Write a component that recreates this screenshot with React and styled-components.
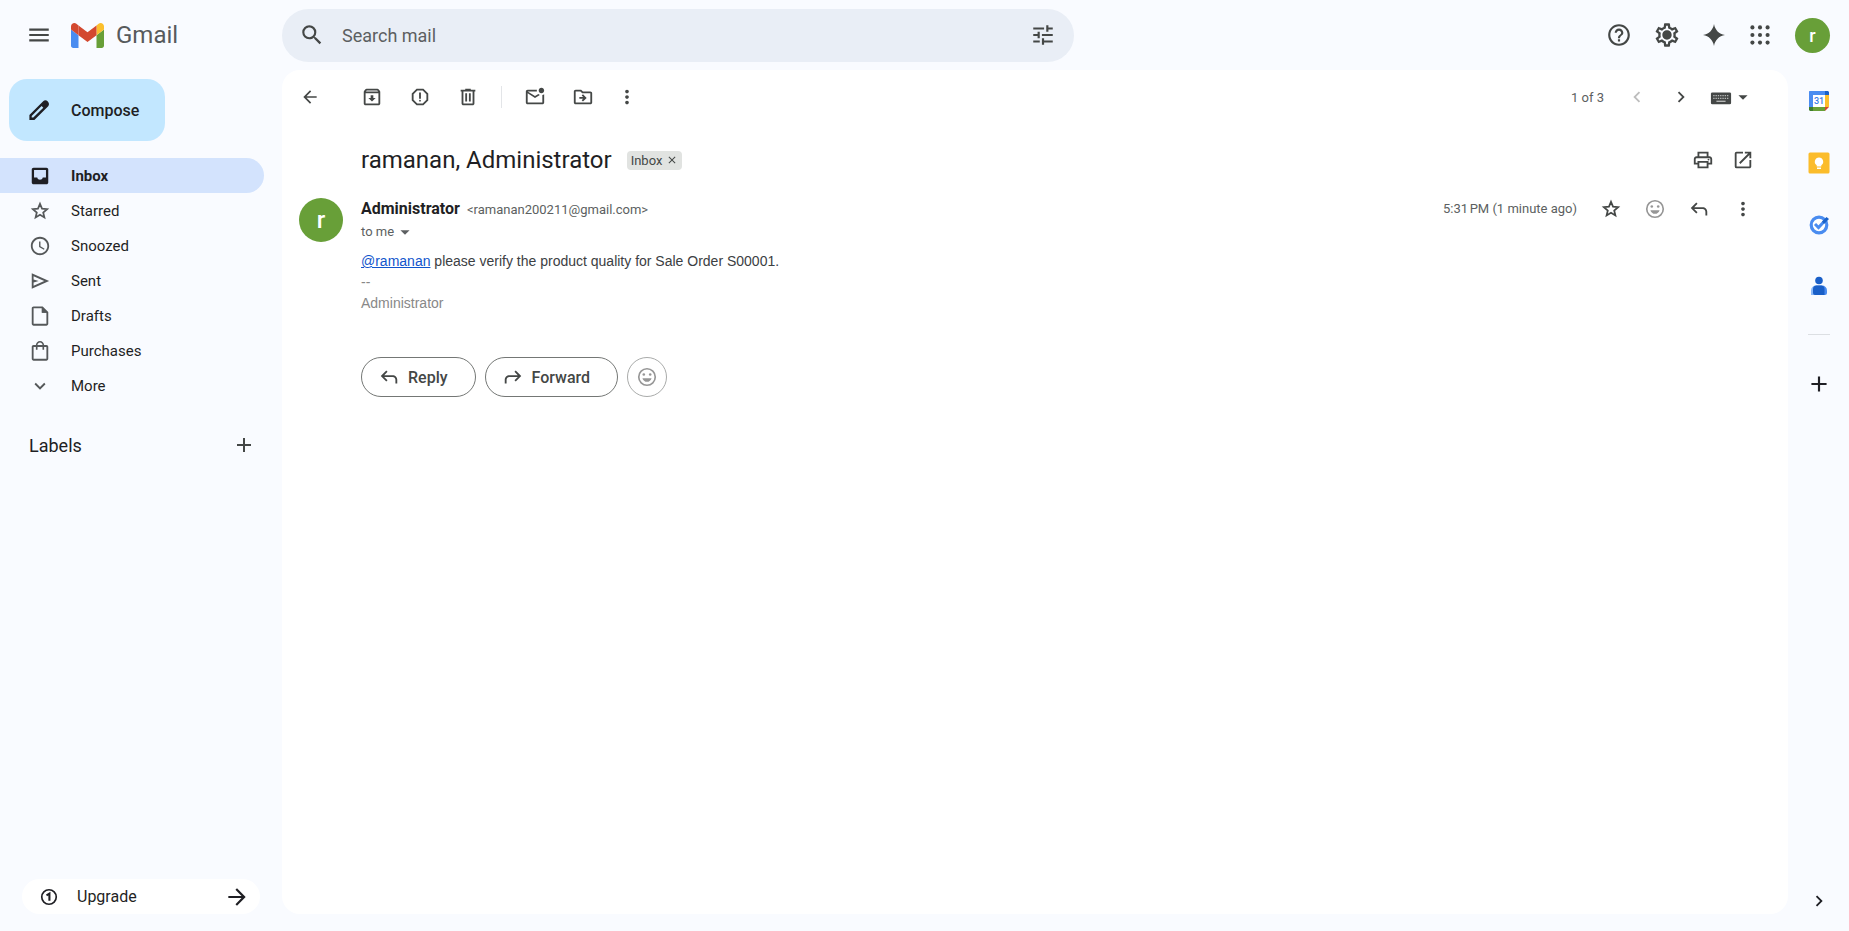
import React, { useState } from "react";
import styled, { createGlobalStyle } from "styled-components";
import {
  MdAccessTime,
  MdAdd,
  MdArrowBack,
  MdArrowDropDown,
  MdArrowForward,
  MdChevronLeft,
  MdChevronRight,
  MdClose,
  MdExpandMore,
  MdHelpOutline,
  MdMenu,
  MdMoreVert,
  MdOpenInNew,
  MdOutlineArchive,
  MdOutlineDriveFileMove,
  MdOutlineMarkEmailUnread,
  MdOutlineReport,
  MdOutlineSettings,
  MdSearch,
  MdTune,
} from "react-icons/md";

const Svg = ({ size = 22, children, ...rest }) => (
  <svg width={size} height={size} viewBox="0 0 24 24" fill="currentColor" aria-hidden="true" {...rest}>
    {children}
  </svg>
);

const GmailMark = () => (
  <svg width="33" height="25" viewBox="52 42 88 66" aria-hidden="true">
    <path fill="#4a8cf0" d="M58 108h14V74L52 59v43c0 3.32 2.69 6 6 6" />
    <path fill="#689f38" d="M120 108h14c3.32 0 6-2.69 6-6V59l-20 15" />
    <path fill="#fbbf2d" d="M120 48v26l20-15v-8c0-7.42-8.47-11.65-14.4-7.2" />
    <path fill="#d3482f" d="M72 74V48l24 18 24-18v26L96 92" />
    <path fill="#d3482f" d="M52 51v8l20 15V48l-5.6-4.2c-5.94-4.45-14.4-.22-14.4 7.2" />
  </svg>
);

const PencilIcon = () => (
  <Svg size={24}>
    <path d="M20.6 3.2c-1.3-1.3-3.2-1.2-4.4 0L2.4 16.9V22h5L21.2 8.2c1.3-1.3.9-3.7-.6-5zM6.3 19.6H4.7V18L14.6 8.1l1.7 1.7z" />
  </Svg>
);

const InboxIcon = () => (
  <Svg>
    <path
      fillRule="evenodd"
      d="M19 3H5c-1.1 0-2 .9-2 2v14c0 1.1.9 2 2 2h14c1.1 0 2-.9 2-2V5c0-1.1-.9-2-2-2zM5.5 5.500h13v8H15c-.3 1.500-1.500 2.500-3 2.500s-2.700-1-3-2.500H5.500z"
    />
  </Svg>
);

const StarIcon = () => (
  <Svg>
    <path
      fill="none"
      stroke="currentColor"
      strokeWidth="1.9"
      d="M12 4.200l2.200 5.200 5.600.5-4.300 3.700 1.300 5.500-4.800-2.900-4.800 2.900 1.300-5.500-4.300-3.700 5.600-.5z"
    />
  </Svg>
);

const SendIcon = () => (
  <Svg>
    <path d="M3 20.5V3.5L22 12zM5 17.2 16.6 12 5 6.8v3.5l5.5 1.7L5 13.7z" />
  </Svg>
);

const DraftIcon = () => (
  <Svg>
    <path d="M15 1.5H5c-1.1 0-2 .9-2 2v17c0 1.1.9 2 2 2h14c1.1 0 2-.9 2-2V7.500zM19 20.500H5v-17h9V8.500h5z" />
    <path d="M14 2l6.500 6.500H14z" />
  </Svg>
);

const BagIcon = () => (
  <Svg>
    <path d="M19 5.500h-2.500C16.300 3 14.500 1 12 1S7.700 3 7.500 5.500H5c-1.100 0-2 .9-2 2v13c0 1.100.9 2 2 2h14c1.100 0 2-.9 2-2v-13c0-1.100-.9-2-2-2zM12 2.800c1.400 0 2.600 1.200 2.800 2.700H9.200c.2-1.500 1.400-2.700 2.800-2.700zM19 20.500H5v-13h2.500v3h1.800v-3h5.400v3h1.800v-3H19z" />
  </Svg>
);

const TrashIcon = () => (
  <Svg>
    <path d="M15 4V3H9v1H4v2h1v13c0 1.100.9 2 2 2h10c1.100 0 2-.9 2-2V6h1V4h-5zm2 15H7V6h10v13zM9 8h2v9H9zm4 0h2v9h-2z" />
  </Svg>
);

const PrintIcon = () => (
  <Svg>
    <path d="M19 8h-1V3H6v5H5c-1.700 0-3 1.300-3 3v6h4v4h12v-4h4v-6c0-1.700-1.300-3-3-3zM8 5h8v3H8zm8 14H8v-4h8zm4-4h-2v-2H6v2H4v-4c0-.6.4-1 1-1h14c.6 0 1 .4 1 1z" />
    <circle cx="18" cy="11.5" r="1" />
  </Svg>
);

const KeyboardIcon = () => (
  <Svg>
    <rect x="1" y="7" width="22" height="13" rx="1.5" />
    <path stroke="#b4b6b5" strokeWidth="1.5" strokeDasharray="1.5 1" d="M3.500 10.500h17M3.500 13.500h17" />
    <path stroke="#b4b6b5" strokeWidth="1.5" d="M7 16.700h10" />
  </Svg>
);

const ReplyIcon = () => (
  <Svg>
    <path d="M19 19v-4c0-1.660-1.340-3-3-3H6.800l3.600 3.600L9 17l-6-6 6-6 1.400 1.400L6.800 10H16c2.760 0 5 2.240 5 5v4z" />
  </Svg>
);

const ForwardIcon = () => (
  <Svg>
    <path d="M5 19v-4c0-1.660 1.340-3 3-3h9.200l-3.600 3.600L15 17l6-6-6-6-1.400 1.400 3.600 3.600H8c-2.760 0-5 2.240-5 5v4z" />
  </Svg>
);

const SmileIcon = () => (
  <Svg>
    <circle cx="12" cy="12" r="9" fill="none" stroke="currentColor" strokeWidth="1.8" />
    <circle cx="8.5" cy="9.3" r="1.4" />
    <circle cx="15.5" cy="9.3" r="1.4" />
    <path d="M7 13.300h10c-.6 2.300-2.600 4-5 4s-4.400-1.700-5-4z" />
  </Svg>
);

const SettingsIcon = () => (
  <GearStack>
    <MdOutlineSettings size={28} />
    <GearDot />
  </GearStack>
);

const SparkIcon = () => (
  <Svg size={24}>
    <path d="M12 1c1 6 5 10 11 11-6 1-10 5-11 11-1-6-5-10-11-11 6-1 10-5 11-11z" />
  </Svg>
);

const AppsIcon = () => (
  <Svg size={26}>
    {[5, 12, 19].map((y) => [5, 12, 19].map((x) => <circle key={`${x}-${y}`} cx={x} cy={y} r="1.9" />))}
  </Svg>
);

const OneIcon = () => (
  <Svg size={20} fill="none" stroke="currentColor">
    <circle cx="12" cy="12" r="8.7" strokeWidth="2" />
    <path d="M9 10l3.500-2v8.500" strokeWidth="2.5" />
  </Svg>
);

const CalendarIcon = () => (
  <svg width="22" height="22" viewBox="0 0 22 22" aria-hidden="true">
    <path fill="#4a8cf0" d="M1.500 1H17v4H5v12H1V1.500z" />
    <path fill="#1a62c9" d="M17 1h3l1 1v3h-4z" />
    <path fill="#fbbf2d" d="M17 5h4v12h-4z" />
    <path fill="#689f38" d="M5 17h12v4H5z" />
    <path fill="#3f7d2c" d="M1 17h4v4H2l-1-1z" />
    <path fill="#d3482f" d="M17 17h4l-4 4z" />
    <path fill="#fff" d="M5 5h12v12H5z" />
    <text x="11" y="14" textAnchor="middle" fontFamily="Roboto, sans-serif" fontSize="9" fontWeight="500" fill="#3a7de8">
      31
    </text>
  </svg>
);

const KeepIcon = () => (
  <svg width="22" height="22" viewBox="0 0 22 22" aria-hidden="true">
    <rect x=".5" y=".5" width="21" height="21" rx="1.5" fill="#fbbc2b" />
    <path fill="#fff" d="M11 5.500a4.200 4.200 0 0 0-2.300 7.700V14.500h4.600v-1.300A4.200 4.200 0 0 0 11 5.500zM9 15.500h4V17H9z" />
  </svg>
);

const TasksIcon = () => (
  <svg width="22" height="22" viewBox="0 0 22 22" aria-hidden="true">
    <circle cx="11" cy="11" r="7.8" fill="#fff" stroke="#4a8cf0" strokeWidth="3.2" />
    <path fill="none" stroke="#4a8cf0" strokeWidth="3" d="M7 10l3.500 3.500L18 5.500" />
    <path fill="#1a62c9" d="M14 7.500L18.500 3l2.500 2-5 5z" />
  </svg>
);

const ContactsIcon = () => (
  <svg width="22" height="22" viewBox="0 0 22 22" aria-hidden="true">
    <circle cx="11" cy="4.5" r="3.8" fill="#1a5fc8" />
    <path fill="#8ab8f8" d="M3 19v-4.500A5 5 0 0 1 8 9.500V19z" />
    <path fill="#4a8cf0" d="M8 9.500h6a5 5 0 0 1 5 5V17a2 2 0 0 1-2 2H8z" />
    <path fill="#1a5fc8" d="M8.500 9.500h5A3.500 3.500 0 0 1 16.500 13v6H7a2 2 0 0 1-2-2v-4a3.500 3.500 0 0 1 3.500-3.500z" />
  </svg>
);

const folders = [
  { name: "Inbox", icon: <InboxIcon /> },
  { name: "Starred", icon: <StarIcon /> },
  { name: "Snoozed", icon: <MdAccessTime size={22} /> },
  { name: "Sent", icon: <SendIcon /> },
  { name: "Drafts", icon: <DraftIcon /> },
  { name: "Purchases", icon: <BagIcon /> },
  { name: "More", icon: <MdExpandMore size={22} /> },
];

const addons = [
  { name: "Calendar", icon: <CalendarIcon /> },
  { name: "Keep", icon: <KeepIcon /> },
  { name: "Tasks", icon: <TasksIcon /> },
  { name: "Contacts", icon: <ContactsIcon /> },
];

const App = () => {
  const [keyword, setKeyword] = useState("");
  const [folder, setFolder] = useState("Inbox");

  return (
    <Page>
      <GlobalStyle />
      <Header>
        <Brand>
          <IconButton aria-label="Main menu">
            <MdMenu size={26} />
          </IconButton>
          <Logo href="#inbox">
            <GmailMark />
            Gmail
          </Logo>
        </Brand>
        <SearchForm role="search">
          <IconButton type="button" aria-label="Search">
            <MdSearch size={26} />
          </IconButton>
          <SearchInput
            aria-label="Search mail"
            placeholder="Search mail"
            value={keyword}
            onChange={(e) => setKeyword(e.target.value)}
          />
          <IconButton type="button" aria-label="Show search options">
            <MdTune size={26} />
          </IconButton>
        </SearchForm>
        <HeaderActions>
          <IconButton $width={48} aria-label="Support">
            <MdHelpOutline size={26} />
          </IconButton>
          <IconButton $width={48} aria-label="Settings">
            <SettingsIcon />
          </IconButton>
          <IconButton $width={46} aria-label="Ask Gemini">
            <SparkIcon />
          </IconButton>
          <IconButton $width={46} aria-label="Google apps">
            <AppsIcon />
          </IconButton>
          <AccountButton aria-label="Account">
            <Avatar $size={35}>r</Avatar>
          </AccountButton>
        </HeaderActions>
      </Header>

      <Body>
        <Sidebar>
          <ComposeButton>
            <PencilIcon />
            Compose
          </ComposeButton>
          <FolderNav>
            {folders.map((item) => (
              <FolderLink
                key={item.name}
                href={`#${item.name.toLowerCase()}`}
                $active={item.name === folder}
                onClick={() => setFolder(item.name)}
              >
                {item.icon}
                {item.name}
              </FolderLink>
            ))}
          </FolderNav>
          <LabelsHeader>
            <LabelsTitle>Labels</LabelsTitle>
            <IconButton $width={40} aria-label="Create new label">
              <MdAdd size={24} />
            </IconButton>
          </LabelsHeader>
          <UpgradeButton>
            <OneIcon />
            <UpgradeText>Upgrade</UpgradeText>
            <MdArrowForward size={26} />
          </UpgradeButton>
        </Sidebar>

        <Panel>
          <Toolbar>
            <BackButton aria-label="Back to Inbox">
              <MdArrowBack size={20} />
            </BackButton>
            <IconButton $width={48} aria-label="Archive">
              <MdOutlineArchive size={22} />
            </IconButton>
            <IconButton $width={48} aria-label="Report spam">
              <MdOutlineReport size={22} />
            </IconButton>
            <IconButton $width={48} aria-label="Delete">
              <TrashIcon />
            </IconButton>
            <Divider />
            <IconButton $width={48} aria-label="Mark as unread">
              <MdOutlineMarkEmailUnread size={22} />
            </IconButton>
            <IconButton $width={48} aria-label="Move to">
              <MdOutlineDriveFileMove size={22} />
            </IconButton>
            <IconButton $width={40} aria-label="More">
              <MdMoreVert size={22} />
            </IconButton>
            <Pager>
              <PagerText>1 of 3</PagerText>
              <IconButton disabled aria-label="Newer">
                <MdChevronLeft size={22} />
              </IconButton>
              <IconButton aria-label="Older">
                <MdChevronRight size={22} />
              </IconButton>
              <InputToolButton aria-label="Input tools">
                <KeyboardIcon />
                <MdArrowDropDown size={22} />
              </InputToolButton>
            </Pager>
          </Toolbar>

          <SubjectRow>
            <Subject>ramanan, Administrator</Subject>
            <InboxTag>
              Inbox
              <TagRemove aria-label="Remove label Inbox">
                <MdClose size={12} />
              </TagRemove>
            </InboxTag>
            <SubjectActions>
              <IconButton $width={40} aria-label="Print">
                <PrintIcon />
              </IconButton>
              <IconButton $width={40} aria-label="Open in new window">
                <MdOpenInNew size={22} />
              </IconButton>
            </SubjectActions>
          </SubjectRow>

          <Message>
            <Avatar $size={44}>r</Avatar>
            <MessageMain>
              <MessageHeader>
                <Sender>
                  <SenderLine>
                    <SenderName>Administrator</SenderName>
                    <SenderMail>&lt;ramanan200211@gmail.com&gt;</SenderMail>
                  </SenderLine>
                  <DetailsButton>
                    to me
                    <MdArrowDropDown size={22} />
                  </DetailsButton>
                </Sender>
                <SentTime>5:31{"\u202f"}PM (1 minute ago)</SentTime>
                <MessageActions>
                  <IconButton aria-label="Star">
                    <StarIcon />
                  </IconButton>
                  <IconButton $faded aria-label="Add reaction">
                    <SmileIcon />
                  </IconButton>
                  <IconButton aria-label="Reply">
                    <ReplyIcon />
                  </IconButton>
                  <IconButton aria-label="More message options">
                    <MdMoreVert size={22} />
                  </IconButton>
                </MessageActions>
              </MessageHeader>
              <MessageText>
                <Mention href="#ramanan">@ramanan</Mention> please verify the product quality for Sale Order S00001.
              </MessageText>
              <Signature>
                --
                <br />
                Administrator
              </Signature>
              <ReplyRow>
                <PillButton>
                  <ReplyIcon />
                  Reply
                </PillButton>
                <PillButton>
                  <ForwardIcon />
                  Forward
                </PillButton>
                <RoundButton aria-label="Add reaction">
                  <SmileIcon />
                </RoundButton>
              </ReplyRow>
            </MessageMain>
          </Message>
        </Panel>

        <AddonRail>
          {addons.map((item) => (
            <AddonButton key={item.name} aria-label={item.name}>
              {item.icon}
            </AddonButton>
          ))}
          <RailLine />
          <AddonButton aria-label="Get add-ons">
            <MdAdd size={26} />
          </AddonButton>
          <HideButton aria-label="Hide side panel">
            <MdChevronRight size={22} />
          </HideButton>
        </AddonRail>
      </Body>
    </Page>
  );
};
export default App;

const GlobalStyle = createGlobalStyle`
  * {
    box-sizing: border-box;
  }

  body {
    margin: 0;
    background: #f9fbff;
    color: #1f1f24;
    font-family: Roboto, "Liberation Sans", sans-serif;
    font-size: 15px;
  }

  button {
    padding: 0;
    border: none;
    background: none;
    color: inherit;
    font: inherit;
    cursor: pointer;
  }

  svg {
    display: block;
    flex-shrink: 0;
  }
`;

const Page = styled.div`
  display: flex;
  flex-direction: column;
  min-height: 100vh;
`;

const Header = styled.header`
  display: flex;
  align-items: center;
  height: 70px;
  padding-right: 19px;
`;

const Brand = styled.div`
  display: flex;
  align-items: center;
  flex: none;
  width: 282px;
  padding-left: 17px;
`;

const IconButton = styled.button`
  display: flex;
  align-items: center;
  justify-content: center;
  flex: none;
  width: ${(props) => props.$width || 44}px;
  height: 40px;
  color: ${(props) => (props.$faded ? "#969696" : "#444746")};

  &:disabled {
    color: #bdbdbd;
    cursor: default;
  }
`;

const Logo = styled.a`
  display: flex;
  align-items: center;
  gap: 12px;
  padding-left: 10px;
  color: #575a5c;
  font-size: 24px;
  text-decoration: none;
`;

const SearchForm = styled.form`
  display: flex;
  align-items: center;
  flex: 0 1 792px;
  height: 53px;
  padding: 0 9px 0 8px;
  border-radius: 27px;
  background: #e9eef6;
`;

const SearchInput = styled.input`
  flex: 1;
  min-width: 0;
  padding: 0 8px;
  border: none;
  outline: none;
  background: transparent;
  color: #1f1f24;
  font: inherit;
  font-size: 18px;

  &::placeholder {
    color: #5c5f61;
    opacity: 1;
  }
`;

const HeaderActions = styled.div`
  display: flex;
  align-items: center;
  margin-left: auto;
`;

const GearStack = styled.span`
  display: grid;
  place-items: center;

  > * {
    grid-area: 1 / 1;
  }
`;

const GearDot = styled.span`
  width: 8px;
  height: 8px;
  border-radius: 50%;
  background: currentColor;
`;

const AccountButton = styled.button`
  margin-left: 12px;
`;

const Avatar = styled.span`
  display: flex;
  align-items: center;
  justify-content: center;
  flex: none;
  width: ${(props) => props.$size}px;
  height: ${(props) => props.$size}px;
  border-radius: 50%;
  background: #689f38;
  color: #fff;
  font-size: ${(props) => (props.$size > 40 ? 24 : 18)}px;
  font-weight: 500;
`;

const Body = styled.div`
  display: flex;
  flex: 1;
`;

const Sidebar = styled.aside`
  display: flex;
  flex-direction: column;
  flex: none;
  width: 282px;
  padding: 9px 18px 17px 0;
`;

const ComposeButton = styled.button`
  display: flex;
  align-items: center;
  gap: 20px;
  width: 156px;
  height: 62px;
  margin-left: 9px;
  padding-left: 18px;
  border-radius: 18px;
  background: #c2e7ff;
  font-size: 16px;
  font-weight: 500;
`;

const FolderNav = styled.nav`
  margin-top: 17px;
`;

const FolderLink = styled.a`
  display: flex;
  align-items: center;
  gap: 20px;
  height: 35px;
  padding-left: 29px;
  border-radius: 0 18px 18px 0;
  background: ${(props) => (props.$active ? "#d3e3fd" : "transparent")};
  color: #1f1f24;
  font-weight: ${(props) => (props.$active ? 700 : 400)};
  text-decoration: none;

  svg {
    color: ${(props) => (props.$active ? "#1f1f24" : "#55585a")};
  }
`;

const LabelsHeader = styled.div`
  display: flex;
  align-items: center;
  justify-content: space-between;
  margin-top: 22px;
  padding-left: 29px;
`;

const LabelsTitle = styled.h2`
  margin: 0;
  font-size: 18px;
  font-weight: 400;
`;

const UpgradeButton = styled.button`
  display: flex;
  align-items: center;
  height: 35px;
  margin: auto 4px 0 22px;
  padding: 0 10px 0 17px;
  border-radius: 18px;
  background: #fff;
`;

const UpgradeText = styled.span`
  flex: 1;
  padding-left: 18px;
  font-size: 16px;
  text-align: left;
`;

const Panel = styled.main`
  flex: 1;
  min-width: 0;
  margin-bottom: 17px;
  border-radius: 18px;
  background: #fff;
`;

const Toolbar = styled.div`
  display: flex;
  align-items: center;
  height: 54px;
  padding: 0 34px 0 6px;
`;

const BackButton = styled(IconButton)`
  margin-right: 16px;
`;

const Divider = styled.span`
  width: 1px;
  height: 22px;
  margin: 0 9px;
  background: #e3e5e8;
`;

const Pager = styled.div`
  display: flex;
  align-items: center;
  margin-left: auto;
`;

const PagerText = styled.span`
  padding-right: 11px;
  color: #5c5f61;
  font-size: 13px;
`;

const InputToolButton = styled.button`
  display: flex;
  align-items: center;
  padding-left: 7px;
  color: #444746;
`;

const SubjectRow = styled.div`
  display: flex;
  align-items: center;
  height: 72px;
  padding: 0 25px 0 79px;
`;

const Subject = styled.h1`
  margin: 0;
  font-size: 24px;
  font-weight: 400;
`;

const InboxTag = styled.span`
  display: flex;
  align-items: center;
  height: 19px;
  margin-left: 15px;
  padding: 0 4px;
  border-radius: 4px;
  background: #e1e3e1;
  color: #444746;
  font-size: 13px;
`;

const TagRemove = styled.button`
  margin-left: 4px;
`;

const SubjectActions = styled.div`
  display: flex;
  margin-left: auto;
`;

const Message = styled.article`
  display: flex;
  align-items: flex-start;
  gap: 18px;
  padding: 2px 23px 0 17px;
`;

const MessageMain = styled.div`
  flex: 1;
  min-width: 0;
`;

const MessageHeader = styled.div`
  display: flex;
  align-items: flex-start;
`;

const Sender = styled.div`
  flex: 1;
`;

const SenderLine = styled.div`
  display: flex;
  align-items: baseline;
  gap: 7px;
  line-height: 22px;
`;

const SenderName = styled.span`
  font-size: 16px;
  font-weight: 700;
`;

const SenderMail = styled.span`
  color: #5c5f61;
  font-size: 13px;
`;

const DetailsButton = styled.button`
  display: flex;
  align-items: center;
  color: #5c5f61;
  font-size: 13px;
  line-height: 22px;
`;

const SentTime = styled.span`
  padding-right: 12px;
  color: #5c5f61;
  font-size: 13px;
  line-height: 22px;
`;

const MessageActions = styled.div`
  display: flex;
  margin-top: -9px;
`;

const MessageText = styled.p`
  margin: 8px 0 0;
  color: #3c4043;
  font-family: "Liberation Sans", Arial, sans-serif;
  font-size: 14px;
  line-height: 21px;
`;

const Mention = styled.a`
  color: #1155cc;
`;

const Signature = styled.p`
  margin: 0;
  color: #888;
  font-family: "Liberation Sans", Arial, sans-serif;
  font-size: 14px;
  line-height: 21px;
`;

const ReplyRow = styled.div`
  display: flex;
  gap: 9px;
  margin-top: 43px;
`;

const PillButton = styled.button`
  display: flex;
  align-items: center;
  gap: 8px;
  height: 40px;
  padding: 0 27px 0 16px;
  border: 1px solid #747775;
  border-radius: 20px;
  color: #444746;
  font-size: 16px;
  font-weight: 500;
`;

const RoundButton = styled.button`
  display: flex;
  align-items: center;
  justify-content: center;
  width: 40px;
  height: 40px;
  border: 1px solid #a9abaa;
  border-radius: 50%;
  color: #969696;
`;

const AddonRail = styled.aside`
  display: flex;
  flex-direction: column;
  align-items: center;
  flex: none;
  width: 61px;
  padding-bottom: 8px;
`;

const AddonButton = styled.button`
  display: flex;
  align-items: center;
  justify-content: center;
  width: 44px;
  height: 62px;
`;

const RailLine = styled.span`
  width: 22px;
  height: 1px;
  margin: 16px 0 18px;
  background: #dcdfe3;
`;

const HideButton = styled(AddonButton)`
  height: 44px;
  margin-top: auto;
`;
